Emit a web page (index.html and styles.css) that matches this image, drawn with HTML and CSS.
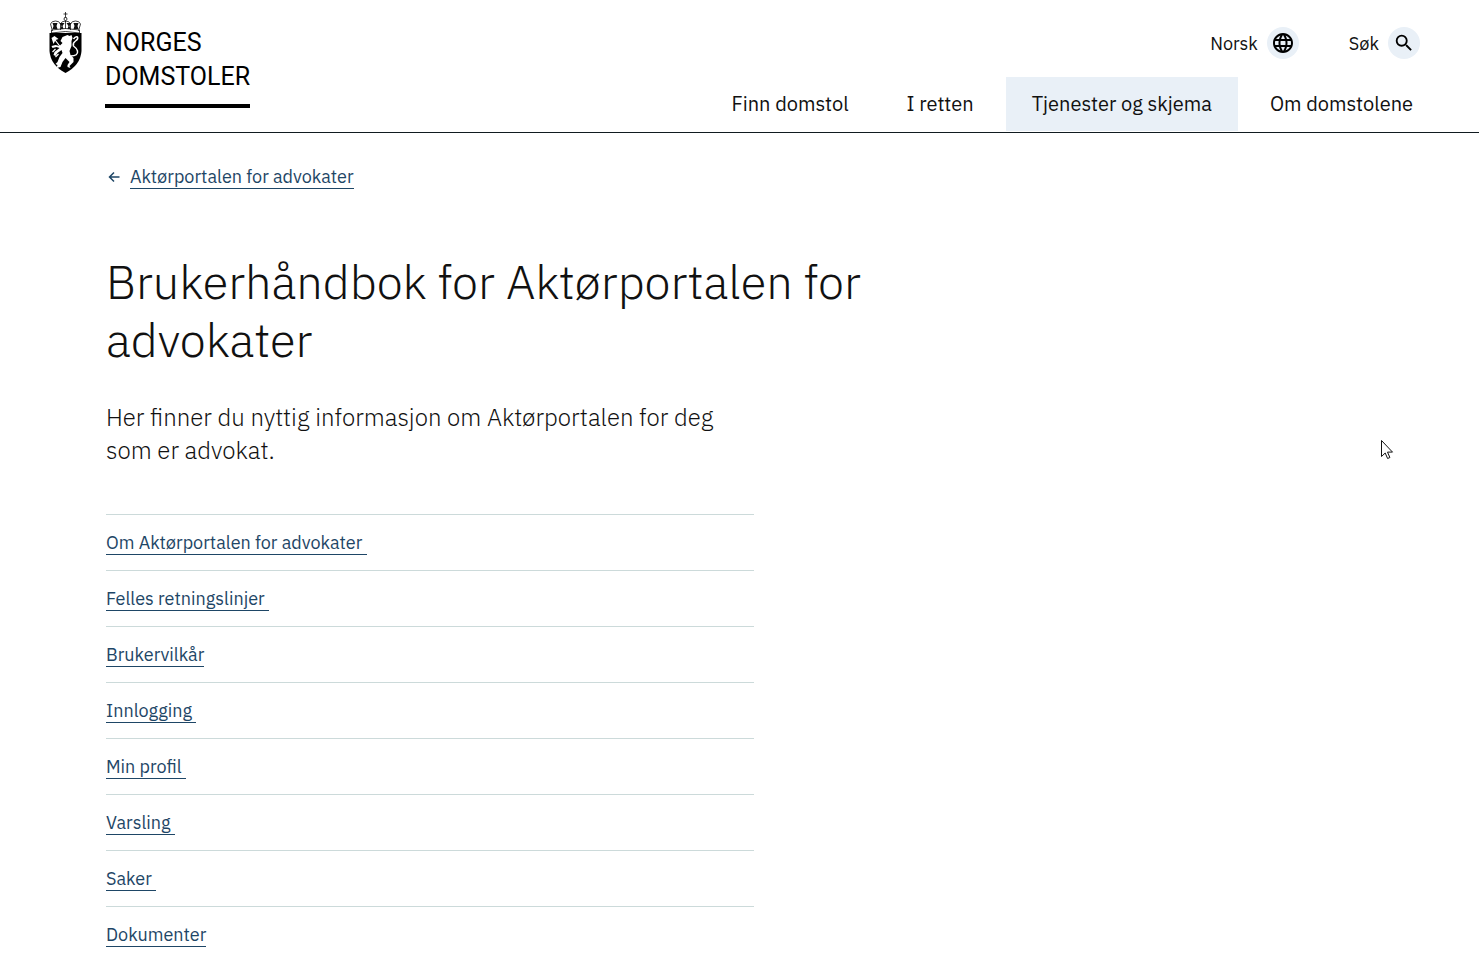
FILE: index.html
```html
<!DOCTYPE html>
<html lang="no">
<head>
    <meta charset="UTF-8">
    <meta name="viewport" content="width=device-width, initial-scale=1.0">
    <title>Brukerhåndbok for Aktørportalen for advokater</title>
    <link rel="stylesheet" href="styles.css">
</head>
<body>
    <header class="header">
        <a href="#" class="logo">
            <svg class="crest" viewBox="0 0 34 64" aria-hidden="true">
                <!-- krone -->
                <g fill="none" stroke="#111" stroke-width="0.8">
                    <path d="M17 1v6M15 3h4M15.500 7h3M17 7v4"/>
                    <path d="M4 20 2 13q1-3 5-3 4 0 5 3 1-3 5-3t5 3q1-3 5-3 4 0 5 3l-2 7"/>
                    <path d="M12 12v7M22 12v7M17 10v8M3 19q14-3 28 0v3q-14-3-28 0z"/>
                </g>
                <path fill="#111" d="M4 12h5l-1 3 1 3H4l1-3zM11 12h5l-2 3 1 3h-3l1-3zM18 12h5l-2 3 1 3h-3l1-3zM25 12h5l-1 3 1 3h-5l1-3z"/>
                <circle cx="17" cy="8" r="1.500" fill="#fff" stroke="#111" stroke-width="0.8"/>
                <!-- skjold -->
                <path d="M1 22h32v18q-1 14-16 22Q2 54 1 40z"/>
                <!-- løve -->
                <path fill="#fff" d="M19 24l2 1 2-1 1 3-1 3v5l-2 5 1 4 3 3v4l-4 4 1 2-3-1v-2l2-3-4-4-3 4-2 5-4 1 1-3-2-1 2-2 2-5 3-4-1-3-4 3-2 3-2-1 1-3 5-4-3-1-4 1-1-2 4-1 4 1 3-3-2-2 2-4z"/>
                <path fill="none" stroke="#fff" stroke-width="1.500" d="M22 45q8 0 7-5-1-3-4-5-1-3 2-5 3-2 2-4-2-1-4 2"/>
                <path fill="none" stroke="#fff" stroke-width="1.200" d="M5 27l7 9M7 38l-3 3M10 43l-3 3"/>
                <path fill="#fff" d="M3 27l3-2 4 3-3 1-2 4z"/>
            </svg>
            <span class="logo-text">NORGES<br>DOMSTOLER</span>
        </a>
        <div class="header-right">
            <div class="tools">
                <button type="button" class="tool">
                    Norsk
                    <span class="tool-icon">
                        <svg width="24" height="24" viewBox="0 0 24 24" aria-hidden="true"><path d="M11.990 2C6.470 2 2 6.480 2 12s4.470 10 9.990 10C17.520 22 22 17.520 22 12S17.520 2 11.990 2zm6.930 6h-2.950a15.650 15.650 0 0 0-1.380-3.560A8.030 8.030 0 0 1 18.920 8zM12 4.040c.83 1.200 1.480 2.530 1.910 3.960h-3.820c.43-1.430 1.080-2.760 1.910-3.960zM4.260 14C4.100 13.360 4 12.690 4 12s.1-1.360.26-2h3.380c-.08.66-.14 1.320-.14 2s.06 1.340.14 2H4.260zm.82 2h2.950c.32 1.250.78 2.450 1.380 3.560A7.990 7.990 0 0 1 5.080 16zm2.950-8H5.080a7.990 7.990 0 0 1 4.330-3.560A15.650 15.650 0 0 0 8.030 8zM12 19.960c-.83-1.200-1.480-2.530-1.910-3.960h3.820c-.43 1.430-1.080 2.760-1.910 3.960zM14.340 14H9.660c-.09-.66-.16-1.320-.16-2s.07-1.350.16-2h4.680c.09.65.16 1.320.16 2s-.07 1.340-.16 2zm.25 5.560c.6-1.110 1.060-2.310 1.380-3.560h2.950a8.030 8.030 0 0 1-4.330 3.560zM16.360 14c.08-.66.14-1.320.14-2s-.06-1.340-.14-2h3.380c.16.64.26 1.310.26 2s-.1 1.360-.26 2h-3.380z"/></svg>
                    </span>
                </button>
                <button type="button" class="tool">
                    Søk
                    <span class="tool-icon">
                        <svg width="22" height="22" viewBox="0 0 24 24" aria-hidden="true"><path d="M15.500 14h-.79l-.28-.27A6.471 6.471 0 0 0 16 9.500 6.500 6.500 0 1 0 9.500 16c1.610 0 3.090-.59 4.230-1.570l.27.28v.79l5 4.990L20.490 19l-4.990-5zm-6 0C7.010 14 5 11.990 5 9.500S7.010 5 9.500 5 14 7.010 14 9.500 11.990 14 9.500 14z"/></svg>
                    </span>
                </button>
            </div>
            <nav class="nav">
                <a href="#">Finn domstol</a>
                <a href="#">I retten</a>
                <a href="#" class="active">Tjenester og skjema</a>
                <a href="#">Om domstolene</a>
            </nav>
        </div>
    </header>

    <main class="content">
        <div class="back">
            <svg width="16" height="16" viewBox="0 0 16 16" aria-hidden="true"><path fill="none" stroke="#1e4666" stroke-width="1.500" d="M13.500 8H3.500M8 3.500 3.500 8 8 12.500"/></svg>
            <a href="#" class="link">Aktørportalen for advokater</a>
        </div>
        <h1>Brukerhåndbok for Aktørportalen for advokater</h1>
        <p class="intro">Her finner du nyttig informasjon om Aktørportalen for deg som er advokat.</p>
        <ul class="list">
            <li><a href="#" class="link">Om Aktørportalen for advokater&nbsp;</a></li>
            <li><a href="#" class="link">Felles retningslinjer&nbsp;</a></li>
            <li><a href="#" class="link">Brukervilkår</a></li>
            <li><a href="#" class="link">Innlogging&nbsp;</a></li>
            <li><a href="#" class="link">Min profil&nbsp;</a></li>
            <li><a href="#" class="link">Varsling&nbsp;</a></li>
            <li><a href="#" class="link">Saker&nbsp;</a></li>
            <li><a href="#" class="link">Dokumenter</a></li>
        </ul>
    </main>

    <svg class="cursor" width="13" height="20" viewBox="0 0 13 20" aria-hidden="true"><path fill="#fff" stroke="#111" d="M.5.500v16l3.700-3.500 2.400 5.500 2.300-1-2.400-5.400h5z"/></svg>
</body>
</html>
```
FILE: styles.css
```css
* {
    box-sizing: border-box;
}
body {
    margin: 0;
    font-family: "IBM Plex Sans", "Noto Sans", sans-serif;
    font-size: 18px;
    line-height: 23px;
    color: #111;
    background-color: #fff;
}
.header {
    display: flex;
    justify-content: space-between;
    padding: 11px 40px 0 48px;
    border-bottom: 1px solid #111b20;
}
.logo {
    display: flex;
    align-items: flex-start;
    gap: 22px;
    color: #000;
    text-decoration: none;
}
.crest {
    width: 35px;
    height: 64px;
}
.logo-text {
    margin-top: 15px;
    padding-bottom: 10px;
    border-bottom: 4px solid #000;
    font-family: Roboto, "Liberation Sans", sans-serif;
    font-size: 25px;
    line-height: 34px;
}
.header-right {
    display: flex;
    flex-direction: column;
    align-items: flex-end;
    padding-top: 16px;
}
.tools {
    display: flex;
    gap: 50px;
    padding-right: 19px;
}
.tool {
    display: flex;
    align-items: center;
    gap: 9px;
    padding: 0;
    border: none;
    background: none;
    font: inherit;
    color: #111;
    cursor: pointer;
}
.tool-icon {
    display: flex;
    align-items: center;
    justify-content: center;
    width: 32px;
    height: 32px;
    border-radius: 50%;
    background-color: #e9f0f7;
}
.nav {
    display: flex;
    gap: 6px;
    margin-top: 18px;
    padding-bottom: 1px;
}
.nav a {
    padding: 13px 26px;
    font-size: 20px;
    line-height: 28px;
    color: #111;
    text-decoration: none;
}
.nav .active {
    background-color: #e9f0f7;
}
.content {
    padding: 32px 106px 0;
}
.back {
    display: flex;
    align-items: center;
    gap: 8px;
}
.link {
    display: inline-block;
    border-bottom: 1px solid #1e4666;
    color: #1e4666;
    text-decoration: none;
}
h1 {
    max-width: 800px;
    margin: 64px 0 32px;
    font-weight: 300;
    font-size: 47px;
    line-height: 58px;
}
.intro {
    max-width: 648px;
    margin: 0 0 47px;
    font-weight: 300;
    font-size: 24px;
    line-height: 33px;
}
.list {
    max-width: 648px;
    margin: 0;
    padding: 0;
    list-style: none;
}
.list li {
    padding: 16px 0 15px;
    border-top: 1px solid #ccdada;
}
.cursor {
    position: absolute;
    top: 440px;
    right: 85px;
}
```
